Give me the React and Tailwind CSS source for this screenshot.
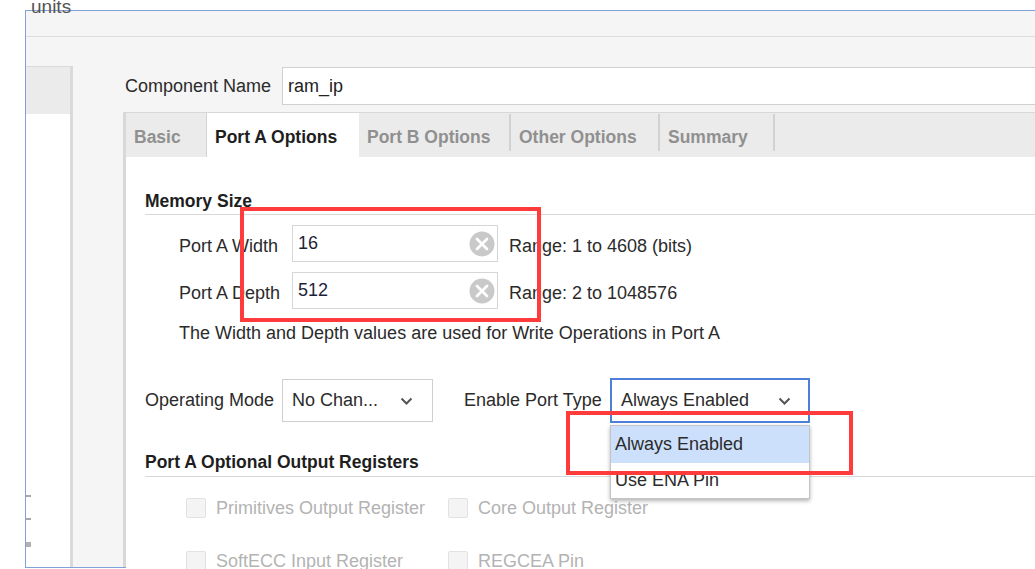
import React from "react";

const font = { fontFamily: '"Liberation Sans", Arial, sans-serif' };

function Chevron() {
  return (
    <svg width="13" height="8" viewBox="0 0 13 8" className="shrink-0">
      <path d="M1.5 1.5 L6.5 6.5 L11.5 1.5" fill="none" stroke="#555" strokeWidth="2" />
    </svg>
  );
}

function ClearIcon() {
  return (
    <svg width="26" height="26" viewBox="0 0 26 26" className="shrink-0">
      <circle cx="13" cy="13" r="12.5" fill="#c9c9c9" />
      <path d="M8 8 L18 18 M18 8 L8 18" stroke="#fff" strokeWidth="2.7" strokeLinecap="round" />
    </svg>
  );
}

function Tab({ label, width, active, sep }) {
  if (active) {
    return (
      <div className={`${width} h-full bg-white border-l border-[#d4d4d4] flex items-center pl-[8px] pt-[5px] font-bold text-[17.5px] text-[#1e1e1e]`}>
        {label}
      </div>
    );
  }
  return (
    <div className={`${width} h-full flex`}>
      <div className="flex-1 flex items-center pl-[8px] pt-[5px] font-bold text-[17.5px] text-[#909090]">{label}</div>
      {sep && <div className="w-[2px] h-[37px] mt-[1px] bg-[#d2d2d2]" />}
    </div>
  );
}

function SizeRow({ label, value, range }) {
  return (
    <div className="flex items-center h-[37px] pl-[34px]">
      <div className="w-[113px] pt-[6px] text-[#2b2b2b]">{label}</div>
      <div className="w-[206px] h-full border border-[#d6d6d6] bg-white flex items-center justify-between pl-[5px] pr-[2px]">
        <span className="text-[#1f1f3a] -mt-[1px]">{value}</span>
        <ClearIcon />
      </div>
      <div className="ml-[11px] pt-[6px] text-[#2b2b2b]">{range}</div>
    </div>
  );
}

function Check({ label }) {
  return (
    <div className="flex items-center h-[20px]">
      <div className="w-[20px] h-[20px] rounded-[2px] border border-[#e2e2e2] bg-[#f4f4f4]" />
      <span className="ml-[10px] text-[#b3b3b3]">{label}</span>
    </div>
  );
}

export default function App() {
  return (
    <div className="relative w-[1035px] h-[569px] bg-white overflow-hidden pt-[10px] pl-[25px] text-[18px]" style={font}>
      <div className="absolute left-[31px] -top-[7px] text-[19px] text-[#555] z-10">units</div>

      <div className="w-[1030px] h-[558px] border-l border-t border-b border-[#7fa3d8] bg-[#f5f5f5] flex flex-col">
        <div className="h-[26px] shrink-0 border-b border-[#dcdcdc]" />

        <div className="flex flex-1 min-h-0">
          {/* left panel */}
          <div className="w-[47px] mt-[29px] border-t border-r-[3px] border-[#dadada] flex flex-col">
            <div className="h-[47px] bg-[#ebebeb]" />
            <div className="flex-1 bg-white flex flex-col justify-end pb-[20px]">
              <div className="w-[5px] h-[2px] bg-[#a8a8a8]" />
              <div className="w-[5px] h-[2px] bg-[#a8a8a8] mt-[21px]" />
              <div className="w-[5px] h-[5px] bg-[#b0b0b0] mt-[22px]" />
            </div>
          </div>

          {/* main column */}
          <div className="flex-1 ml-[50px] flex flex-col pt-[30px] min-w-0">
            <div className="flex items-center h-[38px] shrink-0">
              <div className="w-[159px] pl-[2px] text-[#2b2b2b]">Component Name</div>
              <div className="flex-1 h-full border border-[#d0d0d0] bg-white flex items-center pl-[5px] text-[#222]">
                ram_ip
              </div>
            </div>

            <div className="mt-[7px] flex-1 border-t border-l-[3px] border-[#d8d8d8] flex flex-col min-h-0">
              <div className="h-[3px] bg-[#f4f4f4]" />
              <div className="h-[44px] bg-[#ebebeb] flex shrink-0">
                <Tab label="Basic" width="w-[80px]" />
                <Tab label="Port A Options" width="w-[153px]" active />
                <Tab label="Port B Options" width="w-[152px]" sep />
                <Tab label="Other Options" width="w-[149px]" sep />
                <Tab label="Summary" width="w-[115px]" sep />
              </div>

              <div className="flex-1 bg-white pl-[19px] pt-[33px] flex flex-col">
                <div className="h-[25px] leading-[22px] border-b border-[#d8d8d8] font-bold text-[17.5px] text-[#1e1e1e]">Memory Size</div>

                <div className="mt-[10px] flex flex-col gap-[10px]">
                  <SizeRow label="Port A Width" value="16" range="Range: 1 to 4608 (bits)" />
                  <SizeRow label="Port A Depth" value="512" range="Range: 2 to 1048576" />
                </div>

                <div className="mt-[14px] pl-[34px] leading-[20px] text-[#2b2b2b]">
                  The Width and Depth values are used for Write Operations in Port A
                </div>

                <div className="mt-[35px] flex items-center h-[45px]">
                  <div className="w-[137px] text-[#2b2b2b]">Operating Mode</div>
                  <div className="w-[151px] h-[43px] border border-[#cfcfcf] bg-white flex items-center justify-between pl-[9px] pr-[19px] text-[#2b2b2b]">
                    <span>No Chan...</span>
                    <Chevron />
                  </div>
                  <div className="ml-[31px] w-[146px] text-[#2b2b2b]">Enable Port Type</div>
                  <div className="relative w-[200px] h-[45px]">
                    <div className="w-full h-full border-2 border-[#4f80d9] bg-white flex items-center justify-between pl-[9px] pr-[17px] text-[#2b2b2b]">
                      <span>Always Enabled</span>
                      <Chevron />
                    </div>
                    <div className="absolute left-0 top-[47px] w-[200px] bg-white border border-[#c4c4c4] shadow-[0_2px_4px_rgba(0,0,0,0.3)] z-10 text-[#2b2b2b]">
                      <div className="h-[37px] bg-[#cde0fb] flex items-center pl-[4px]">Always Enabled</div>
                      <div className="h-[35px] flex items-center pl-[4px]">Use ENA Pin</div>
                    </div>
                  </div>
                </div>

                <div className="mt-[28px] h-[26px] leading-[22px] border-b border-[#d8d8d8] font-bold text-[17.5px] text-[#1e1e1e]">
                  Port A Optional Output Registers
                </div>

                <div className="pl-[41px] mt-[21px] flex flex-col gap-[33px]">
                  <div className="flex items-center h-[20px]">
                    <div className="w-[262px]"><Check label="Primitives Output Register" /></div>
                    <Check label="Core Output Register" />
                  </div>
                  <div className="flex items-center h-[20px]">
                    <div className="w-[262px]"><Check label="SoftECC Input Register" /></div>
                    <Check label="REGCEA Pin" />
                  </div>
                </div>
              </div>
            </div>
          </div>
        </div>
      </div>

      {/* red annotation boxes */}
      <div className="absolute left-[240px] top-[207px] w-[301px] h-[115px] border-4 border-[#ff3b3b] z-20" />
      <div className="absolute left-[566px] top-[411px] w-[287px] h-[64px] border-4 border-[#ff3b3b] z-20" />
    </div>
  );
}
